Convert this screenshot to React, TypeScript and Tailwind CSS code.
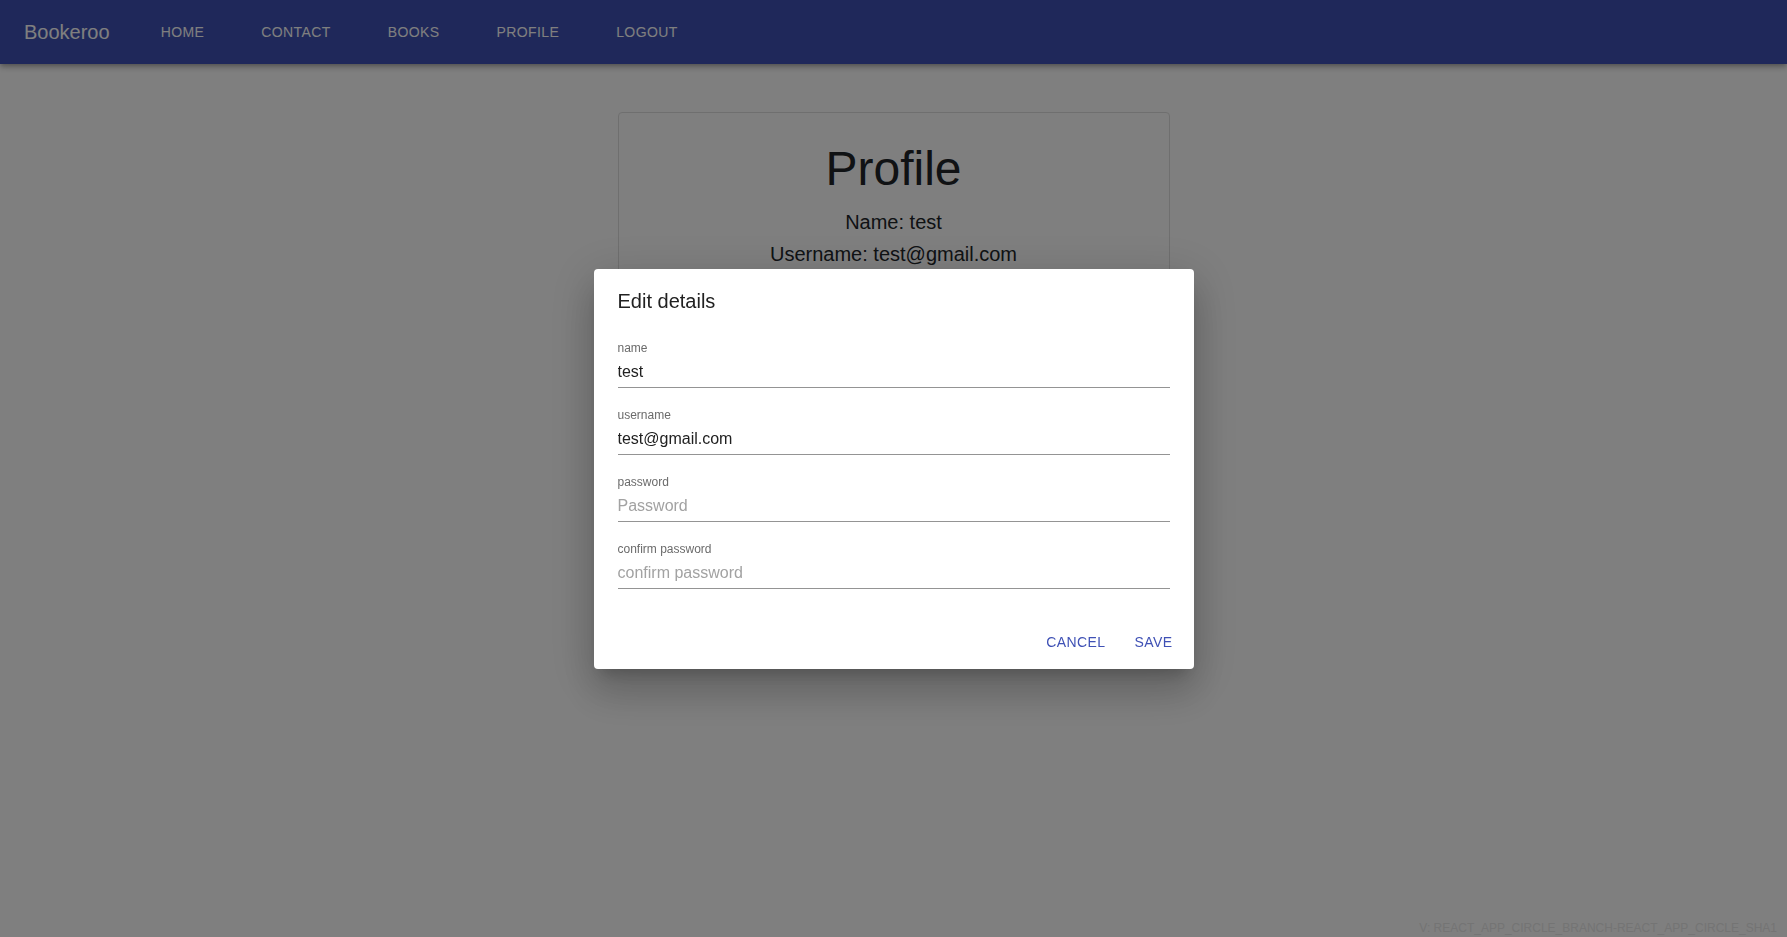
const navLinks = ['Home', 'Contact', 'Books', 'Profile', 'Logout'];

const fields = [
  { label: 'name', value: 'test', placeholder: 'Name' },
  { label: 'username', value: 'test@gmail.com', placeholder: 'Username' },
  { label: 'password', value: '', placeholder: 'Password' },
  { label: 'confirm password', value: '', placeholder: 'confirm password' },
];

function Navbar() {
  return (
    <header className="relative z-10 bg-[#3f51b5] shadow-[0px_2px_4px_-1px_rgba(0,0,0,0.2),0px_4px_5px_0px_rgba(0,0,0,0.14),0px_1px_10px_0px_rgba(0,0,0,0.12)]">
      <nav className="flex h-16 items-center px-6 text-white">
        <a href="#home" className="text-[20px] leading-8">
          Bookeroo
        </a>
        <ul className="ml-[43px] flex items-center gap-[41px]">
          {navLinks.map((link) => (
            <li key={link}>
              <a
                href={`#${link.toLowerCase()}`}
                className="block px-2 py-1.5 text-[14px] uppercase leading-6 tracking-[0.4px]"
              >
                {link}
              </a>
            </li>
          ))}
        </ul>
      </nav>
    </header>
  );
}

function ProfileCard() {
  return (
    <section className="w-[552px] rounded border border-[#dfdfdf] bg-white pb-8 pt-[28px] text-center text-[#212529]">
      <h1 className="text-[48px] leading-[56px]">Profile</h1>
      <p className="mt-[9px] text-[20px] leading-8">Name: test</p>
      <p className="text-[20px] leading-8">Username: test@gmail.com</p>
      <button
        type="button"
        className="mt-4 rounded bg-[#3f51b5] px-4 py-1.5 text-[14px] uppercase text-white"
      >
        Edit details
      </button>
    </section>
  );
}

function EditDialog() {
  return (
    <div className="fixed inset-0 z-50 flex items-center justify-center bg-black/50">
      <div className="w-[600px] rounded bg-white shadow-[0px_11px_15px_-7px_rgba(0,0,0,0.2),0px_24px_38px_3px_rgba(0,0,0,0.14),0px_9px_46px_8px_rgba(0,0,0,0.12)]">
        <h2 className="px-6 py-4 text-[20px] leading-8 text-[#212121]">Edit details</h2>
        <div className="px-6 pb-7 pt-2">
          {fields.map((field, i) => (
            <div key={field.label} className={i === 0 ? '' : 'mt-5'}>
              <label className="block text-[12px] leading-[14px] text-[#6b6b6b]">{field.label}</label>
              <div className="mt-[5px] border-b border-[#949494] pb-1">
                <input
                  type={field.label.includes('password') ? 'password' : 'text'}
                  defaultValue={field.value}
                  placeholder={field.placeholder}
                  className="block h-[23px] w-full bg-transparent p-0 text-[16px] leading-[23px] text-[#212121] outline-none placeholder:text-[#a2a2a2]"
                />
              </div>
            </div>
          ))}
        </div>
        <div className="flex justify-end gap-2 p-2">
          <button
            type="button"
            className="h-9 min-w-16 rounded px-2 text-[14px] uppercase tracking-[0.4px] text-[#3f51b5]"
          >
            Cancel
          </button>
          <button
            type="button"
            className="h-9 min-w-16 rounded px-2 text-[14px] uppercase tracking-[0.4px] text-[#3f51b5]"
          >
            Save
          </button>
        </div>
      </div>
    </div>
  );
}

export default function App() {
  return (
    <div className="relative flex min-h-screen flex-col bg-white font-['Liberation_Sans',Arial,sans-serif]">
      <Navbar />
      <main className="flex justify-center pt-12">
        <ProfileCard />
      </main>
      <footer className="mt-auto pb-[2px] pr-[10px] text-right text-[12px] uppercase leading-[13px] text-[#e8e8e8]">
        v: REACT_APP_CIRCLE_BRANCH-REACT_APP_CIRCLE_SHA1
      </footer>
      <EditDialog />
    </div>
  );
}
